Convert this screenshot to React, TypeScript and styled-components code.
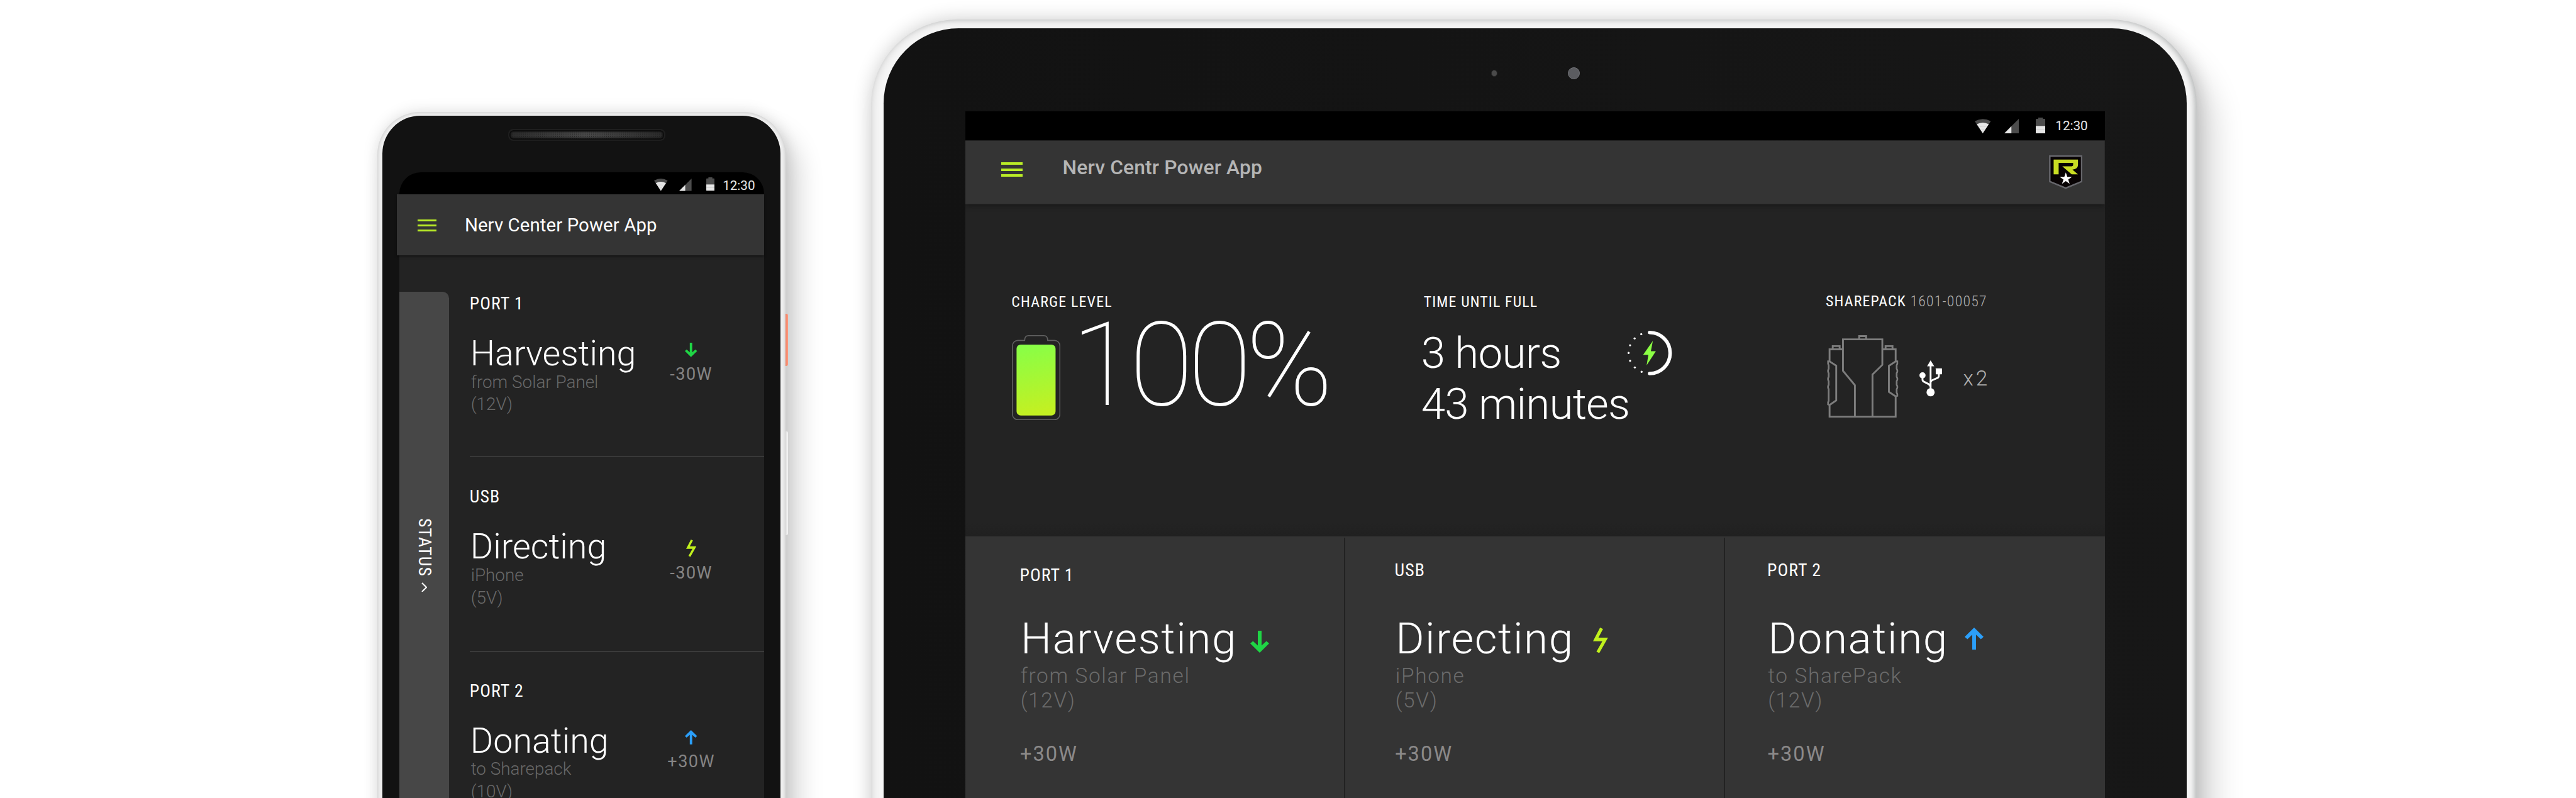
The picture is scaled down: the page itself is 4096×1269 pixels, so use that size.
import type { ReactNode } from "react";
import styled, { createGlobalStyle } from "styled-components";

/* The artboard is drawn on a 5150px wide grid and rendered at 4096px. */
const SCALE = 4096 / 5150;
const u = (n: number) => `${+(n * SCALE).toFixed(3)}px`;

const sans = `Roboto, "Noto Sans", sans-serif`;
const condensed = `"Roboto Condensed", Roboto, sans-serif`;

const color = {
  lime: "#b9ec27",
  bolt: "#c0f01d",
  green: "#1fd545",
  blue: "#2b9ffa",
  bar: "#343434",
  body: "#232323",
  watt: "#858484",
};

const GlobalStyle = createGlobalStyle`
  * { box-sizing: border-box; }
  html, body { margin: 0; background: #fff; }
  body { font-family: ${sans}; color: #fff; overflow: hidden; }
  svg { display: block; flex: none; }
`;

const Artboard = styled.main`
  display: flex;
  align-items: flex-start;
  width: 4096px;
  height: 1269px;
  padding-left: ${u(755)};
  overflow: hidden;
  background: #fff;
`;

/* ---------- shared pieces ---------- */

const StatusBar = styled.header<{ $height: number; $right: number; $bottom: number; $radius?: number }>`
  display: flex;
  flex: none;
  justify-content: flex-end;
  align-items: flex-end;
  height: ${(p) => u(p.$height)};
  padding: 0 ${(p) => u(p.$right)} ${(p) => u(p.$bottom)} 0;
  border-radius: ${(p) => u(p.$radius ?? 0)} ${(p) => u(p.$radius ?? 0)} 0 0;
  background: #000;
`;

const StatusIcons = styled.div<{ $k: number }>`
  display: flex;
  align-items: flex-end;
  & > svg:nth-child(1) { margin-right: ${(p) => u(27.7 * p.$k)}; }
  & > svg:nth-child(2) { margin-right: ${(p) => u(33.5 * p.$k)}; }
  & > svg:nth-child(3) { margin-right: ${(p) => u(20 * p.$k)}; }
`;

const Clock = styled.time<{ $lift: number }>`
  font-size: ${u(26)};
  line-height: ${u(22)};
  margin-bottom: ${(p) => u(p.$lift)};
  color: #e6e6e6;
`;

const Toolbar = styled.div<{ $height: number }>`
  display: flex;
  flex: none;
  align-items: center;
  height: ${(p) => u(p.$height)};
  background: ${color.bar};
  position: relative;
`;

const SectionLabel = styled.h2<{ $size: number; $spacing: number }>`
  margin: 0;
  font-family: ${condensed};
  font-weight: 400;
  font-size: ${(p) => u(p.$size)};
  line-height: ${(p) => u(p.$size)};
  letter-spacing: ${(p) => u(p.$spacing)};
  white-space: nowrap;
`;

const StatusGlyphs = ({ k, lift }: { k: number; lift: number }) => (
  <StatusIcons $k={k}>
    <svg width={32 * k * SCALE} height={29 * k * SCALE} viewBox="0 0 96 86">
      <path d="M0 14Q48-14 96 14L48 86Z" fill="#4c4c4c" />
      <path d="M12 32Q48 12 84 32L48 86Z" fill="#e6e6e6" />
      <path d="M30 46Q48 42 66 46M40 65H57" stroke="#bdbdbd" strokeWidth="2" fill="none" />
    </svg>
    <svg width={29 * k * SCALE} height={29 * k * SCALE} viewBox="0 0 86 86">
      <path d="M86 0V86H0Z" fill="#4c4c4c" />
      <path d="M42 44V86H0Z" fill="#e6e6e6" />
    </svg>
    <svg width={19.4 * k * SCALE} height={31.6 * k * SCALE} viewBox="0 0 58 95">
      <path d="M15 0H43V8H54Q58 8 58 12V50H0V12Q0 8 4 8H15Z" fill="#4c4c4c" />
      <path d="M0 50H58V91Q58 95 54 95H4Q0 95 0 91Z" fill="#e6e6e6" />
      <path d="M0 73H58" stroke="#bdbdbd" strokeWidth="2.5" />
    </svg>
    <Clock $lift={lift}>12:30</Clock>
  </StatusIcons>
);

const MenuButton = styled.button<{ $width: number; $height: number; $bar: number; $left: number; $lift?: number }>`
  display: flex;
  flex-direction: column;
  justify-content: space-between;
  width: ${(p) => u(p.$width)};
  height: ${(p) => u(p.$height)};
  margin: 0 0 ${(p) => u(p.$lift ?? 0)} ${(p) => u(p.$left)};
  padding: 0;
  border: 0;
  background: none;
  & > i {
    height: ${(p) => u(p.$bar)};
    background: ${color.lime};
  }
`;

type Flow = "down" | "up" | "bolt";

const FlowIcon = ({ kind, k = 1 }: { kind: Flow; k?: number }) => {
  if (kind === "bolt")
    return (
      <svg width={30 * k * SCALE} height={51 * k * SCALE} viewBox="0 0 30 51">
        <path d="M14.1 0L20 2.8L10.8 20H30L12.5 51L6.8 48.2L18.6 27.3H0Z" fill={color.bolt} />
      </svg>
    );
  return (
    <svg width={37.7 * k * SCALE} height={44 * k * SCALE} viewBox="0 0 37.7 44">
      <path
        d="M15.1 0H22.6V29.7L32.3 20.6L37.7 25.6L18.85 44L0 25.6L5.4 20.6L15.1 29.7Z"
        fill={kind === "down" ? color.green : color.blue}
        transform={kind === "up" ? "matrix(1 0 0 -1 0 44)" : undefined}
      />
    </svg>
  );
};

/* ---------- phone ---------- */

const Phone = styled.section`
  display: flex;
  flex: none;
  width: ${u(821)};
  margin-top: ${u(223.2)};
  height: ${u(1500)};
`;

const PhoneShell = styled.div`
  width: ${u(815)};
  flex: none;
  padding: ${u(8.5)} ${u(10)} 0;
  border-radius: ${u(86)} ${u(86)} 0 0;
  background: #f0f0f0;
  box-shadow:
    inset 0 0 ${u(8)} rgba(0, 0, 0, 0.2),
    0 0 ${u(30)} rgba(0, 0, 0, 0.13),
    ${u(26)} ${u(36)} ${u(50)} rgba(0, 0, 0, 0.17);
`;

const PhoneGlass = styled.div`
  height: 100%;
  padding: ${u(26)} ${u(32)} 0 ${u(33)};
  border-radius: ${u(76)} ${u(76)} 0 0;
  background: #121212;
`;

const Speaker = styled.div`
  width: ${u(314)};
  height: ${u(24)};
  margin: 0 0 ${u(63.3)} ${u(218)};
  border: ${u(3)} solid #1e1e1e;
  border-radius: ${u(10)};
  background:
    radial-gradient(circle, #1b1b1b 32%, transparent 42%) 0 0 / 3px 3px,
    linear-gradient(90deg, #2a2a2a, #484848 50%, #2a2a2a);
  box-shadow: inset 0 0 ${u(3)} ${u(3)} #0a0a0a;
`;

const PhoneScreen = styled.div`
  display: flex;
  flex-direction: column;
  height: ${u(1400)};
  background: linear-gradient(transparent ${u(60)}, ${color.body} 0);
`;

const PhoneToolbar = styled(Toolbar)`
  margin: 0 ${u(1)} 0 ${u(-4)};
  padding-top: ${u(2.6)};
  box-shadow: 0 ${u(2)} ${u(5)} rgba(0, 0, 0, 0.45);
`;

const PhoneTitle = styled.h1`
  margin: ${u(1.6)} 0 0 ${u(57)};
  font-size: ${u(37)};
  line-height: ${u(37)};
  letter-spacing: ${u(0.1)};
  font-weight: 400;
`;

const PhoneBody = styled.div`
  display: flex;
  flex: 1;
`;

const StatusDrawer = styled.aside`
  display: flex;
  flex-direction: column;
  align-items: center;
  flex: none;
  width: ${u(100)};
  margin-top: ${u(73)};
  padding-top: ${u(453)};
  border-radius: 0 ${u(13)} 0 0;
  background: #474747;
`;

const DrawerLabel = styled.span`
  writing-mode: vertical-rl;
  margin: 0 0 ${u(11)} ${u(2)};
  font-family: ${condensed};
  font-size: ${u(35)};
  line-height: ${u(35)};
  letter-spacing: ${u(1.3)};
`;

const PortList = styled.ul`
  flex: 1;
  margin: 0;
  padding: ${u(16.7)} 0 0 ${u(41)};
  list-style: none;
`;

const PortItem = styled.li`
  height: ${u(388)};
  padding-top: ${u(61.3)};
  border-top: ${u(2.5)} solid #555;
  &:first-child {
    height: ${u(386.5)};
    border-top-color: transparent;
  }
`;

const PortRow = styled.div`
  display: flex;
  justify-content: space-between;
  align-items: flex-start;
  margin-top: ${u(48)};
  padding-right: ${u(86)};
`;

const PortMode = styled.h3`
  margin: 0 0 0 ${u(1.2)};
  font-size: ${u(70)};
  line-height: ${u(70)};
  font-weight: 300;
`;

const PortSource = styled.p`
  margin: ${u(-1)} 0 0 ${u(2.4)};
  font-size: ${u(35)};
  line-height: ${u(45)};
  font-weight: 300;
  color: #686868;
`;

const Readout = styled.div<{ $top: number; $gap: number }>`
  display: flex;
  flex-direction: column;
  align-items: center;
  gap: ${(p) => u(p.$gap)};
  width: ${u(120)};
  padding-top: ${(p) => u(p.$top)};
  font-size: ${u(34)};
  line-height: ${u(34)};
  letter-spacing: ${u(1.9)};
  color: ${color.watt};
`;

const SideKeys = styled.div`
  display: flex;
  flex-direction: column;
  gap: ${u(130)};
  width: ${u(6)};
  padding-top: ${u(404)};
`;

const SideKey = styled.div<{ $height: number; $tone: string; $edge: string }>`
  height: ${(p) => u(p.$height)};
  border-radius: 0 ${u(3)} ${u(3)} 0;
  background: linear-gradient(90deg, ${(p) => p.$edge}, ${(p) => p.$tone} 60%);
`;

const phonePorts: { label: string; mode: string; source: string; volts: string; flow: Flow; watts: string }[] = [
  { label: "PORT 1", mode: "Harvesting", source: "from Solar Panel", volts: "(12V)", flow: "down", watts: "-30W" },
  { label: "USB", mode: "Directing", source: "iPhone", volts: "(5V)", flow: "bolt", watts: "-30W" },
  { label: "PORT 2", mode: "Donating", source: "to Sharepack", volts: "(10V)", flow: "up", watts: "+30W" },
];

const PhoneMockup = () => (
  <Phone>
    <PhoneShell>
      <PhoneGlass>
        <Speaker />
        <PhoneScreen>
          <StatusBar $height={44} $right={18.5} $bottom={7} $radius={43}>
            <StatusGlyphs k={0.85} lift={-1} />
          </StatusBar>
          <PhoneToolbar $height={121}>
            <MenuButton $width={37.5} $height={25} $bar={4.5} $left={40.6}>
              <i /><i /><i />
            </MenuButton>
            <PhoneTitle>Nerv Center Power App</PhoneTitle>
          </PhoneToolbar>
          <PhoneBody>
            <StatusDrawer>
              <DrawerLabel>STATUS</DrawerLabel>
              <svg width={12 * SCALE} height={20 * SCALE} viewBox="0 0 12 20">
                <path d="M1.2 1.2L10.2 10L1.2 18.8" stroke="#fff" strokeWidth="2.6" fill="none" />
              </svg>
            </StatusDrawer>
            <PortList>
              {phonePorts.map((p) => (
                <PortItem key={p.label}>
                  <SectionLabel $size={35} $spacing={1.3}>{p.label}</SectionLabel>
                  <PortRow>
                    <div>
                      <PortMode>{p.mode}</PortMode>
                      <PortSource>{p.source}<br />{p.volts}</PortSource>
                    </div>
                    <Readout $top={p.flow === "bolt" ? 20.3 : 13} $gap={p.flow === "bolt" ? 15.5 : 18.6}>
                      <FlowIcon kind={p.flow} k={p.flow === "bolt" ? 0.68 : 0.65} />
                      <span>{p.watts}</span>
                    </Readout>
                  </PortRow>
                </PortItem>
              ))}
            </PortList>
          </PhoneBody>
        </PhoneScreen>
      </PhoneGlass>
    </PhoneShell>
    <SideKeys>
      <SideKey $height={105} $tone="#ff9478" $edge="#e07a60" />
      <SideKey $height={208} $tone="#f0f0f0" $edge="#d6d6d6" />
    </SideKeys>
  </Phone>
);

/* ---------- tablet ---------- */

const Tablet = styled.section`
  flex: none;
  width: ${u(2650)};
  height: ${u(1700)};
  margin: ${u(39)} 0 0 ${u(166)};
  padding: ${u(17)} ${u(20)} 0 ${u(24)};
  border-radius: ${u(172)} ${u(172)} 0 0;
  background: #f6f6f6;
  box-shadow:
    inset ${u(-5)} 0 ${u(9)} rgba(40, 50, 50, 0.18),
    inset 0 0 ${u(20)} rgba(0, 0, 0, 0.17),
    0 0 ${u(38)} rgba(0, 0, 0, 0.2),
    ${u(36)} ${u(50)} ${u(60)} rgba(0, 0, 0, 0.15);
`;

const TabletGlass = styled.div`
  height: 100%;
  padding: 0 ${u(164)};
  border-radius: ${u(150)} ${u(150)} 0 0;
  background: linear-gradient(90deg, #121212, #171717);
`;

const CameraRow = styled.div`
  display: flex;
  align-items: center;
  gap: ${u(140)};
  height: ${u(167)};
  padding: ${u(14)} 0 0 ${u(1051)};
`;

const Lens = styled.span<{ $size: number; $fill: string; $ring: string }>`
  width: ${(p) => u(p.$size)};
  height: ${(p) => u(p.$size)};
  border: ${u(1.5)} solid ${(p) => p.$ring};
  border-radius: 50%;
  background: ${(p) => p.$fill};
`;

const TabletToolbar = styled(Toolbar)`
  padding-right: ${u(45)};
  border-bottom: ${u(1.3)} solid #2a2a2a;
  box-shadow: 0 ${u(3)} ${u(12)} rgba(0, 0, 0, 0.4);
  clip-path: inset(0 0 ${u(-24)} 0);
`;

const TabletTitle = styled.h1`
  margin: 0 auto ${u(16.6)} ${u(79.5)};
  font-size: ${u(40)};
  line-height: ${u(40)};
  letter-spacing: ${u(0.19)};
  font-weight: 500;
  color: #b5b5b5;
`;

const Summary = styled.div`
  display: grid;
  grid-template-columns: ${u(819)} ${u(809)} 1fr;
  height: ${u(663.6)};
  padding: ${u(181.3)} 0 0 ${u(92.2)};
  background: linear-gradient(${color.body} 96%, #202020);
`;

const Metric = styled.div<{ $lift?: number }>`
  margin-top: ${(p) => u(-(p.$lift ?? 0))};
`;

const ChargeRow = styled.div`
  display: flex;
  align-items: flex-start;
  & > svg { margin: ${u(49.7)} 0 0 ${u(1)}; }
`;

const Percent = styled.div`
  margin: ${u(29.8)} 0 0 ${u(21.5)};
  font-size: ${u(233)};
  line-height: ${u(160)};
  font-weight: 100;
  letter-spacing: ${u(-11)};
`;

const TimeLabel = styled(SectionLabel)`
  padding-left: ${u(5)};
`;

const TimeLeft = styled.div`
  width: ${u(502)};
  margin-top: ${u(34.2)};
  font-size: ${u(87)};
  line-height: ${u(102.7)};
  letter-spacing: ${u(-1)};
  font-weight: 300;
`;

const TimeLine = styled.div`
  display: flex;
  justify-content: space-between;
  align-items: center;
`;

const Serial = styled.span`
  font-weight: 300;
  color: #b0b0b0;
`;

const PackRow = styled.div`
  display: flex;
  align-items: flex-start;
  padding: ${u(51.7)} 0 0 ${u(2.5)};
  & > svg:nth-child(2) { margin: ${u(51)} 0 0 ${u(42.3)}; }
`;

const Count = styled.span`
  margin: ${u(65)} 0 0 ${u(42)};
  font-size: ${u(42)};
  line-height: ${u(42)};
  font-weight: 300;
  letter-spacing: ${u(5)};
  color: #b0b0b0;
`;

const Columns = styled.div`
  display: grid;
  grid-template-columns: ${u(759)} ${u(760)} 1fr;
  height: ${u(560)};
  background: ${color.bar};
`;

const Column = styled.article<{ $inset: number; $top: number }>`
  margin-top: ${u(2.5)};
  padding: ${(p) => u(p.$top - 2.5)} 0 0 ${(p) => u(p.$inset)};
  &:not(:last-child) { border-right: ${u(2.6)} solid #222; }
`;

const ColumnHead = styled.div<{ $height: number }>`
  height: ${(p) => u(p.$height)};
`;

const ColumnMode = styled.div<{ $gap: number; $drop: number }>`
  display: flex;
  align-items: flex-start;
  margin-left: ${u(2)};
  font-size: ${u(87)};
  line-height: ${u(87)};
  letter-spacing: ${u(2)};
  font-weight: 300;
  & > svg { margin: ${(p) => u(p.$drop)} 0 0 ${(p) => u(p.$gap)}; }
`;

const ColumnSource = styled.p`
  margin: ${u(8.2)} 0 ${u(61.7)} ${u(1.5)};
  font-size: ${u(42)};
  line-height: ${u(49)};
  letter-spacing: ${u(2.1)};
  font-weight: 300;
  color: #6b6b6b;
`;

const ColumnWatts = styled.div`
  margin-left: ${u(0.7)};
  font-size: ${u(41)};
  line-height: ${u(41)};
  letter-spacing: ${u(2.5)};
  color: #8b8989;
`;

const Badge = () => (
  <svg width={67 * SCALE} height={67.4 * SCALE} viewBox="498 273 201 202">
    <path d="M503 277.5H694V430L598.5 469.5L503 430Z" fill="#080304" stroke="#66666b" strokeWidth="9" />
    <path
      d="M526 298H672V332Q672 352 639 359L672 387H634L578 339H628Q643 339 643 330V318H556V387H526Z"
      fill="#c9dd23"
    />
    <path d="M599 376L608 402H636L613.5 418L622 444L599 428L576 444L585 418L562 402H590Z" fill="#fff" />
  </svg>
);

const BatteryGauge = () => (
  <svg width={97 * SCALE} height={170 * SCALE} viewBox="0 0 97 170">
    <defs>
      <linearGradient id="charge" x1="0" y1="0" x2="0.1" y2="1">
        <stop offset="0" stopColor="#86ff48" />
        <stop offset="1" stopColor="#c3f022" />
      </linearGradient>
    </defs>
    <path
      d="M12 10.5H25.5Q25.5 1 33 1H64Q71.5 1 71.5 10.5H85A11 11 0 0 1 96 21.5V158A11 11 0 0 1 85 169H12A11 11 0 0 1 1 158V21.5A11 11 0 0 1 12 10.5Z"
      fill="none"
      stroke="#606060"
      strokeWidth="2"
    />
    <rect x="9.3" y="18.7" width="78" height="142" rx="8.5" fill="url(#charge)" />
  </svg>
);

const ringDots = [
  [27.3, 6.7], [14, 15.3], [4.9, 29], [2, 44.3], [5, 60], [14.4, 73.3], [28, 82],
];

const ChargeRing = () => (
  <svg width={89 * SCALE} height={89 * SCALE} viewBox="0 0 89 89">
    <path d="M44 3.5A41 41 0 0 1 44 85.5" stroke="#fff" strokeWidth="7" strokeLinecap="round" fill="none" />
    {ringDots.map(([x, y]) => <circle key={y} cx={x} cy={y} r="2.1" fill="#fff" />)}
    <path d="M50.5 20L46.5 41H56.5L38 69L41.5 48H31Z" fill="#8bff44" />
  </svg>
);

const PackOutline = () => (
  <svg width={142.7 * SCALE} height={165.3 * SCALE} viewBox="158 330 428 496">
    <g fill="none" stroke="#7d7d7d" strokeWidth="11">
      <path d="M254 415H173.5V487L213.5 513V721L173.5 749V819H570V697L529.5 670V514L570 487V415H490" />
      <path d="M325.5 819V630L254 544V355H490V508L431 566V819" />
      <path d="M351 355V335.5H393V355M192.5 415V395.5H234V415M509.5 415V395.5H551V415" />
      <path
        d="M174 487H164.5V502L168 510V532L164.5 540V550L168 558V580L164.5 588V598L168 606V628L164.5 636V646L168 654V725L164.5 732V745L174 749"
        strokeWidth="10"
      />
      <path
        d="M570 487H580V502L576 510V532L580 540V550L576 558V580L580 588V598L576 606V628L580 636V646L576 654V675L580 683V694L570 697"
        strokeWidth="10"
      />
    </g>
  </svg>
);

const UsbIcon = () => (
  <svg width={45.3 * SCALE} height={72.3 * SCALE} viewBox="713 484 136 217">
    <path d="M780 484L802 520H759Z" fill="#fff" />
    <g fill="none" stroke="#fff" strokeWidth="11">
      <path d="M780 515V670" />
      <path d="M731.5 588V600Q731.5 609 741 613L767 626Q780 633 780 645" />
      <path d="M829.5 565V577Q829.5 586 820 590L793 602Q780 608 780 616" />
    </g>
    <circle cx="780" cy="676" r="24.5" fill="#fff" />
    <circle cx="731.5" cy="574" r="18.5" fill="#fff" />
    <rect x="811" y="532" width="37.5" height="35.5" rx="2" fill="#fff" />
  </svg>
);

type ColumnData = {
  label: string; mode: string; source: string; volts: string; flow: Flow;
  inset: number; top: number; gap: number; drop: number;
};

const columns: ColumnData[] = [
  { label: "PORT 1", mode: "Harvesting", source: "from Solar Panel", volts: "(12V)", flow: "down", inset: 108.8, top: 60, gap: 27, drop: 28.2 },
  { label: "USB", mode: "Directing", source: "iPhone", volts: "(5V)", flow: "bolt", inset: 99.3, top: 50.6, gap: 38, drop: 21.4 },
  { label: "PORT 2", mode: "Donating", source: "to SharePack", volts: "(12V)", flow: "up", inset: 84.2, top: 50.6, gap: 32.7, drop: 21.4 },
];

const PortColumn = ({ data, icon }: { data: ColumnData; icon: ReactNode }) => (
  <Column $inset={data.inset} $top={data.top}>
    <ColumnHead $height={160.5 - data.top}>
      <SectionLabel $size={35} $spacing={1.3}>{data.label}</SectionLabel>
    </ColumnHead>
    <ColumnMode $gap={data.gap} $drop={data.drop}>
      <span>{data.mode}</span>
      {icon}
    </ColumnMode>
    <ColumnSource>{data.source}<br />{data.volts}</ColumnSource>
    <ColumnWatts>+30W</ColumnWatts>
  </Column>
);

const TabletMockup = () => (
  <Tablet>
    <TabletGlass>
      <CameraRow>
        <Lens $size={13} $fill="#4a4a4a" $ring="#262626" />
        <Lens $size={24} $fill="#5b5c60" $ring="#74757a" />
      </CameraRow>
      <StatusBar $height={58} $right={34} $bottom={14.6}>
        <StatusGlyphs k={1} lift={3.6} />
      </StatusBar>
      <TabletToolbar $height={128}>
        <MenuButton $width={43} $height={28.5} $bar={4.8} $left={72} $lift={10.5}>
          <i /><i /><i />
        </MenuButton>
        <TabletTitle>Nerv Centr Power App</TabletTitle>
        <Badge />
      </TabletToolbar>
      <Summary>
        <Metric>
          <SectionLabel $size={30} $spacing={1.5}>CHARGE LEVEL</SectionLabel>
          <ChargeRow>
            <BatteryGauge />
            <Percent>100%</Percent>
          </ChargeRow>
        </Metric>
        <Metric>
          <TimeLabel $size={30} $spacing={1.45}>TIME UNTIL FULL</TimeLabel>
          <TimeLeft>
            <TimeLine>
              <span>3 hours</span>
              <ChargeRing />
            </TimeLine>
            <TimeLine>43 minutes</TimeLine>
          </TimeLeft>
        </Metric>
        <Metric $lift={2}>
          <SectionLabel $size={30} $spacing={1.45}>SHAREPACK <Serial>1601-00057</Serial></SectionLabel>
          <PackRow>
            <PackOutline />
            <UsbIcon />
            <Count>x2</Count>
          </PackRow>
        </Metric>
      </Summary>
      <Columns>
        {columns.map((c) => <PortColumn key={c.label} data={c} icon={<FlowIcon kind={c.flow} />} />)}
      </Columns>
    </TabletGlass>
  </Tablet>
);

export default function App() {
  return (
    <>
      <GlobalStyle />
      <Artboard>
        <PhoneMockup />
        <TabletMockup />
      </Artboard>
    </>
  );
}
